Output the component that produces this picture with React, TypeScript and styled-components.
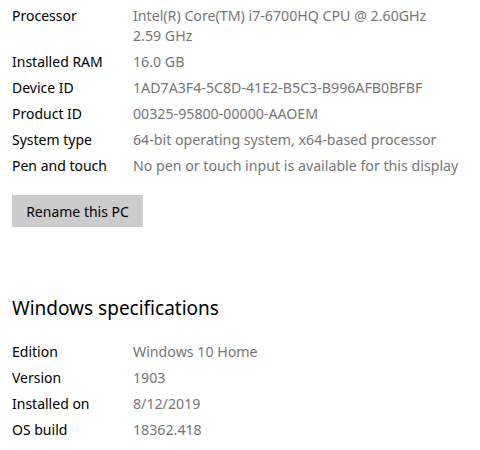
import React from "react";
import styled, { createGlobalStyle } from "styled-components";

const GlobalStyle = createGlobalStyle`
  body {
    margin: 0;
    background: #ffffff;
    font-family: "Noto Sans", "Open Sans", sans-serif;
  }
`;

const Page = styled.div`
  padding: 6px 12px 0 12px;
  display: flex;
  flex-direction: column;
`;

const SpecList = styled.div`
  display: flex;
  flex-direction: column;
  gap: 6px;
`;

const Row = styled.div`
  display: grid;
  grid-template-columns: 121px 1fr;
  font-size: 14px;
  line-height: 20px;
`;

const Label = styled.div`
  color: #000000;
`;

const Value = styled.div`
  color: #767676;
  font-size: 14.2px;
`;

const RenameButton = styled.button`
  align-self: flex-start;
  margin-top: 19px;
  width: 131px;
  height: 32px;
  border: none;
  background: #cccccc;
  color: #000000;
  font-family: inherit;
  font-size: 14px;
  padding: 0;
`;

const Heading = styled.h2`
  margin: 67px 0 20px 0;
  font-size: 19px;
  line-height: 28px;
  font-weight: 400;
  color: #000000;
`;

type Spec = { label: string; value: React.ReactNode };

const device: Spec[] = [
  {
    label: "Processor",
    value: (
      <>
        Intel(R) Core(TM) i7-6700HQ CPU @ 2.60GHz
        <br />
        2.59 GHz
      </>
    ),
  },
  { label: "Installed RAM", value: "16.0 GB" },
  { label: "Device ID", value: "1AD7A3F4-5C8D-41E2-B5C3-B996AFB0BFBF" },
  { label: "Product ID", value: "00325-95800-00000-AAOEM" },
  { label: "System type", value: "64-bit operating system, x64-based processor" },
  { label: "Pen and touch", value: "No pen or touch input is available for this display" },
];

const windows: Spec[] = [
  { label: "Edition", value: "Windows 10 Home" },
  { label: "Version", value: "1903" },
  { label: "Installed on", value: "8/12/2019" },
  { label: "OS build", value: "18362.418" },
];

const SpecRows: React.FC<{ specs: Spec[] }> = ({ specs }) => (
  <SpecList>
    {specs.map((s) => (
      <Row key={s.label}>
        <Label>{s.label}</Label>
        <Value>{s.value}</Value>
      </Row>
    ))}
  </SpecList>
);

const App: React.FC = () => {
  return (
    <>
      <GlobalStyle />
      <Page>
        <SpecRows specs={device} />
        <RenameButton>Rename this PC</RenameButton>
        <Heading>Windows specifications</Heading>
        <SpecRows specs={windows} />
      </Page>
    </>
  );
};

export default App;
